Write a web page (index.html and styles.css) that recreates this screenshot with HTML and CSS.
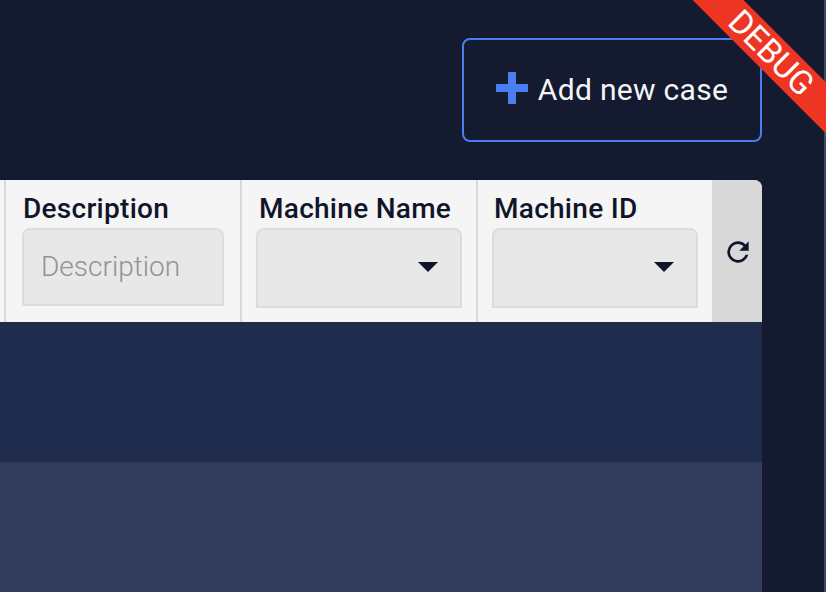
FILE: index.html
```html
<!DOCTYPE html>
<html lang="en">
<head>
<meta charset="utf-8">
<title>Cases</title>
<link rel="stylesheet" href="styles.css">
</head>
<body>
<div class="page">
  <main class="content">
    <div class="toolbar">
      <button class="add-btn" type="button">
        <svg class="plus" viewBox="0 0 32 32" width="32" height="32" aria-hidden="true"><path d="M12 0h8v12h12v8H20v12h-8V20H0v-8h12z"/></svg>
        <span class="add-text">Add new case</span>
      </button>
    </div>
    <div class="table">
      <div class="header">
        <div class="stub"></div>
        <div class="col col-desc">
          <div class="label">Description</div>
          <div class="field placeholder">Description</div>
        </div>
        <div class="col">
          <div class="label">Machine Name</div>
          <div class="field select"><span class="caret"></span></div>
        </div>
        <div class="col col-last">
          <div class="label">Machine ID</div>
          <div class="field select"><span class="caret"></span></div>
        </div>
        <div class="refresh">
          <svg viewBox="0 0 24 24" width="32" height="32" aria-hidden="true"><path d="M17.65 6.35A7.96 7.96 0 0 0 12 4a8 8 0 1 0 7.73 10h-2.08A6 6 0 1 1 12 6c1.66 0 3.14.69 4.22 1.78L13 11h7V4z"/></svg>
        </div>
      </div>
      <div class="row row-a"></div>
      <div class="row row-b"></div>
    </div>
  </main>
  <div class="scroll-edge"></div>
</div>
<div class="debug-corner"><div class="debug">DEBUG</div></div>
</body>
</html>
```
FILE: styles.css
```css
* { box-sizing: border-box; }
html, body { margin: 0; height: 100%; overflow: hidden; }
body { background: #141a30; font-family: Roboto, "Liberation Sans", sans-serif; }
.page { width: 826px; height: 592px; overflow: hidden; display: flex; justify-content: space-between; }
.content { width: 762px; display: flex; flex-direction: column; }
.scroll-edge { width: 2px; background: #43485c; }
.toolbar { display: flex; justify-content: flex-end; padding-top: 38px; height: 180px; }
.add-btn {
  width: 300px; height: 104px; display: flex; align-items: center; justify-content: center; gap: 10px;
  background: transparent; border: 2px solid #4a7ef0; border-radius: 8px;
  color: #f5f5f5; font: 400 30px Roboto, sans-serif; letter-spacing: .3px; padding: 0 0 4px;
}
.add-text { padding-top: 3px; }
.plus { fill: #4a7ef0; display: block; }
.table { border-top-right-radius: 8px; overflow: hidden; }
.header { height: 142px; background: #f5f5f5; display: flex; }
.stub { width: 6px; border-right: 2px solid #d8d8d8; flex: none; }
.col { width: 236px; flex: none; padding: 13px 14px 0; border-right: 2px solid #d8d8d8; }
.col-desc { padding: 13px 16px 0; }
.col-last { width: 234px; border-right: 0; }
.label { font-size: 28px; font-weight: 500; letter-spacing: .28px; line-height: 32px; color: #10152a; padding-left: 3px; height: 35px; white-space: nowrap; }
.col-desc .label { padding-left: 1px; }
.col-last .label { padding-left: 2px; }
.field { height: 80px; background: #e8e8e8; border: 2px solid #dcdcdc; border-radius: 8px 8px 0 0; }
.col-desc .field { height: 78px; }
.placeholder { color: #909399; font-size: 28px; font-weight: 300; line-height: 74px; padding-left: 17px; }
.select { position: relative; }
.caret { position: absolute; right: 22px; top: 32px; width: 0; height: 0; border-left: 10px solid transparent; border-right: 10px solid transparent; border-top: 10px solid #10152a; }
.refresh { flex: 1; background: #d8d8d8; display: flex; justify-content: center; padding: 56px 0 0 2px; }
.refresh svg { fill: #10152a; display: block; }
.row { height: 140px; }
.row-a { background: #202c4d; }
.row-b { height: 130px; background: #313c5b; }
.debug-corner { position: absolute; top: 0; right: 0; width: 140px; height: 140px; overflow: hidden; }
.debug {
  position: absolute; top: 35px; left: -15px; width: 200px; height: 36px;
  transform: rotate(45deg);
  background: #ee3524; color: #fff; text-align: center;
  font: 400 33px/36px Roboto, sans-serif;
}
```
